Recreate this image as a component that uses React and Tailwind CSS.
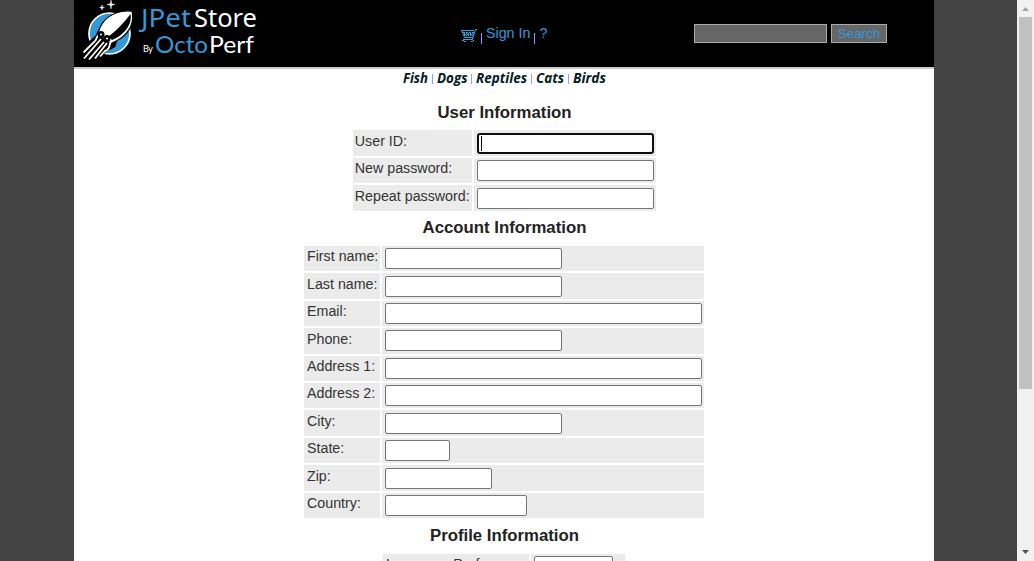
import React from "react";

const userFields = [
  { label: "User ID:", focused: true },
  { label: "New password:" },
  { label: "Repeat password:" },
];

const accountFields = [
  { label: "First name:", width: "w-[177px]" },
  { label: "Last name:", width: "w-[177px]" },
  { label: "Email:", width: "w-[317px]" },
  { label: "Phone:", width: "w-[177px]" },
  { label: "Address 1:", width: "w-[317px]" },
  { label: "Address 2:", width: "w-[317px]" },
  { label: "City:", width: "w-[177px]" },
  { label: "State:", width: "w-[65px]" },
  { label: "Zip:", width: "w-[107px]" },
  { label: "Country:", width: "w-[142px]" },
];

const categories = [
  { name: "Fish", width: 25 },
  { name: "Dogs", width: 30.5 },
  { name: "Reptiles", width: 51 },
  { name: "Cats", width: 28 },
  { name: "Birds", width: 33 },
];

function Logo() {
  return (
    <svg width="190" height="64" viewBox="0 0 190 64" className="block shrink-0">
      <circle cx="35.500" cy="33.500" r="20.500" fill="#3298d6" stroke="#fff" strokeWidth="1.700" />
      <path d="M57 12.500 C45 11 35 16 29 24 L23 36 L14 44 L22 60 L31 51 L40 46 L42 40 C53 35 59 25 57 12.500Z" fill="#000" stroke="#000" strokeWidth="3" strokeLinejoin="round" />
      <path d="M57 12.500 C47 11.500 37 15 31 22 C28 26 26 30 25.500 34 L37 42 C42 40 49 36 53 30 C57 25 58 19 57 12.500Z" fill="#fff" stroke="#fff" strokeWidth="1.500" />
      <path d="M56.500 14 C57.500 20 55.500 26 51 31 C47 35.500 42 38.500 38 40 L34.500 36.500 C42 31 50 23 56.500 14Z" fill="#000" />
      <path d="M25 34 C22 37 23 40 20 42 L9.500 52.500 M27 39 L10 58.500 M30 42 L15 59.500 M33 43 L21 58.500 M37 41 C35 45 36 50 31 51 L26 56.500" fill="none" stroke="#fff" strokeWidth="1.800" />
      <circle cx="27" cy="34.500" r="3.500" fill="#000" />
      <circle cx="33" cy="38.500" r="3.500" fill="#000" />
      <circle cx="27" cy="34.500" r="1" fill="#fff" />
      <circle cx="33" cy="38.500" r="1" fill="#fff" />
      <path d="M37 0 L37.800 3.700 L41 4.500 L37.800 5.300 L37 9 L36.200 5.300 L33 4.500 L36.200 3.700Z M28 5 L28.600 6.900 L30.500 7.500 L28.600 8.100 L28 10 L27.400 8.100 L25.500 7.500 L27.400 6.900Z" fill="#fff" stroke="#fff" strokeWidth=".4" />
      <text x="67" y="27" fontFamily="'Noto Sans', sans-serif" fontSize="26" fill="#3298d6" textLength="50" lengthAdjust="spacingAndGlyphs">JPet</text>
      <text x="120" y="27" fontFamily="'Noto Sans', sans-serif" fontSize="25" fill="#fff" textLength="63" lengthAdjust="spacingAndGlyphs">Store</text>
      <text x="69" y="52" fontFamily="Lato, sans-serif" fontSize="9" fill="#fff" textLength="10">By</text>
      <text x="81" y="53" fontFamily="Lato, sans-serif" fontSize="24" fill="#3298d6" textLength="53" lengthAdjust="spacingAndGlyphs">Octo</text>
      <text x="135" y="53" fontFamily="Lato, sans-serif" fontSize="24" fill="#fff" textLength="45" lengthAdjust="spacingAndGlyphs">Perf</text>
    </svg>
  );
}

function Cart() {
  return (
    <svg width="16" height="16" viewBox="0 0 16 16" fill="none" stroke="#1fa8e0" className="mt-[28px] block shrink-0">
      <path d="M0 2.500H13 M16 1.500H14.500L12 9.500H3.500 M1 3L3.500 9.500" />
      <path d="M2 4.500H13M3 6.500H13" strokeDasharray="2 1" />
      <path d="M3 5.500H13M3 7.500H12" strokeDasharray="1 1" />
      <path d="M11.500 10V11.500H2" />
      <path d="M3 13.500h2M10 13.500h2M1 12.500h2M12 12.500h1" />
    </svg>
  );
}

function Separator({ className }) {
  return <span className={"block w-px shrink-0 bg-[#9999ff] " + className} />;
}

function Heading({ children }) {
  return (
    <h3 className="pl-[1px] text-center text-[16.75px] leading-[20px] font-bold text-[#222]">{children}</h3>
  );
}

function Row({ label, labelWidth, cellWidth, cellPadding, width, focused }) {
  return (
    <div className="flex h-[25.45px] gap-[2px]">
      <div className={"shrink-0 bg-[#ebebeb] pt-[2.5px] leading-[17px] whitespace-nowrap " + labelWidth}>
        {label}
      </div>
      <div className={"bg-[#ebebeb] pl-[3px] " + cellPadding + " " + cellWidth}>
        <div
          className={
            "h-[21px] bg-white " +
            (focused
              ? "rounded-[3px] border-2 border-[#101010] pt-[1px] pl-[2px] "
              : "rounded-[2px] border border-[#767676] ") +
            width
          }
        >
          {focused && <span className="block h-[15px] w-px bg-black" />}
        </div>
      </div>
    </div>
  );
}

function Scrollbar() {
  return (
    <div className="flex w-[17px] shrink-0 flex-col items-center bg-[#f1f1f1]">
      <svg width="17" height="17" viewBox="0 0 17 17" className="block shrink-0">
        <path d="M5 11L8.500 7L12 11Z" fill="#a3a3a3" />
      </svg>
      <div className="h-[372px] w-[13px] bg-[#c1c1c1]" />
      <svg width="17" height="17" viewBox="0 0 17 17" className="mt-auto block shrink-0">
        <path d="M5 6H12L8.500 10Z" fill="#505050" />
      </svg>
    </div>
  );
}

export default function App() {
  return (
    <div className="flex h-[561px] w-[1034px] overflow-hidden bg-[#444] font-['Liberation_Sans',Arial,sans-serif] text-[14.25px] text-[#333]">
      <div className="flex-1 pl-[74px]">
        <div className="h-[561px] w-[860px] overflow-hidden bg-white">
          <header className="flex h-[69px] border-b-2 border-[#ccc] bg-black">
            <div className="w-[387px] shrink-0">
              <Logo />
            </div>
            <div className="flex w-[233px] shrink-0 leading-[17px] text-[#3399dd]">
              <Cart />
              <Separator className="mt-[33px] ml-[4px] h-[11px]" />
              <a className="mt-[25px] ml-[4px] w-[46px] whitespace-nowrap">Sign In</a>
              <Separator className="mt-[33px] ml-[2px] h-[11px]" />
              <a className="mt-[25px] ml-[4.500px]">?</a>
            </div>
            <div className="flex gap-[4px] pt-[24px]">
              <div className="h-[19px] w-[133px] border border-[#aaa] bg-[#666]" />
              <div className="h-[19px] w-[56px] border border-[#aaa] bg-[#666] text-center text-[13.333px] leading-[17px] text-[#3399dd]">
                Search
              </div>
            </div>
          </header>

          <nav className="flex h-[18px] pt-[2px] pl-[328.6px]">
            {categories.map((category, index) => (
              <React.Fragment key={category.name}>
                {index > 0 && <Separator className="mx-[4px] mt-[3px] h-[10px]" />}
                <svg width={category.width} height="16" className="block shrink-0 overflow-visible">
                  <text
                    x="0"
                    y="12"
                    fill="#002020"
                    fontFamily="'Open Sans', sans-serif"
                    fontSize="13.500"
                    fontWeight="700"
                    fontStyle="italic"
                    textLength={category.width}
                    lengthAdjust="spacingAndGlyphs"
                  >
                    {category.name}
                  </text>
                </svg>
              </React.Fragment>
            ))}
          </nav>

          <main className="flex flex-col items-center">
            <div className="mt-[16px]">
              <Heading>User Information</Heading>
            </div>
            <div className="mt-[7.2px] flex flex-col gap-[2px]">
              {userFields.map((field) => (
                <Row
                  key={field.label}
                  {...field}
                  labelWidth="w-[119px] pl-[2.3px]"
                  cellWidth="w-[182px]"
                  cellPadding="pt-[2.45px]"
                  width="w-[177px]"
                />
              ))}
            </div>
            <div className="mt-[7.45px]">
              <Heading>Account Information</Heading>
            </div>
            <div className="mt-[7.85px] flex flex-col gap-[2px]">
              {accountFields.map((field) => (
                <Row
                  key={field.label}
                  {...field}
                  labelWidth="w-[76px] pl-[3px]"
                  cellWidth="w-[322px]"
                  cellPadding="pt-[2.32px]"
                />
              ))}
            </div>
            <div className="mt-[7.65px]">
              <Heading>Profile Information</Heading>
            </div>
            <div className="mt-[8px] flex gap-[2px]">
              <div className="h-[26px] w-[146px] bg-[#ebebeb] pt-[2.65px] pl-[3px] leading-[17px] whitespace-nowrap">
                Language Preference:
              </div>
              <div className="h-[26px] w-[94px] bg-[#ebebeb] pt-[2px] pl-[3px]">
                <div className="h-[22px] w-[79px] rounded-[2px] border border-[#767676] bg-white pl-[4px] text-[13.333px] leading-[17px] text-black">
                  english
                </div>
              </div>
            </div>
          </main>
        </div>
      </div>
      <Scrollbar />
    </div>
  );
}
